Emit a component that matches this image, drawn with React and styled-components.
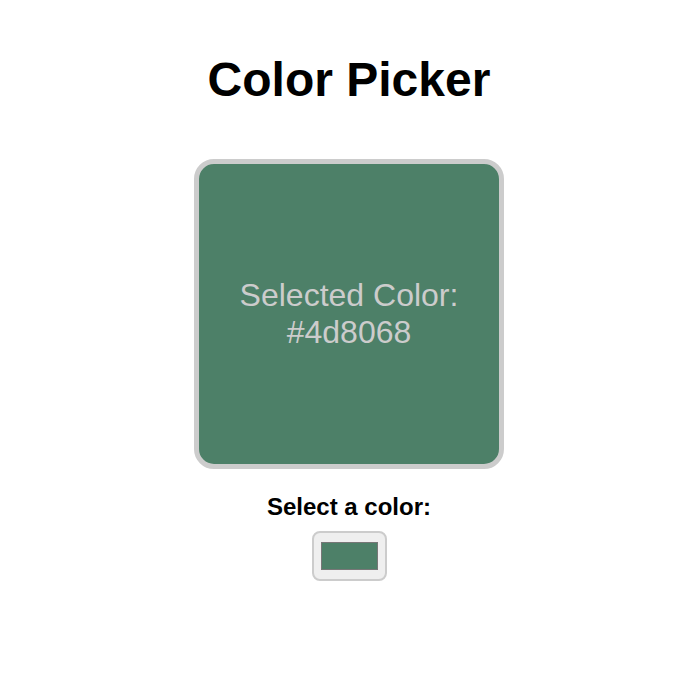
import React, { useState } from "react";
import styled, { createGlobalStyle } from "styled-components";

const GlobalStyle = createGlobalStyle`
  body {
    margin: 0;
    background: #ffffff;
    font-family: "Liberation Sans", Arial, sans-serif;
  }
`;

const Container = styled.div`
  display: flex;
  flex-direction: column;
  align-items: center;
  padding: 20px;
  text-align: center;
`;

const Title = styled.h1`
  font-size: 48px;
  font-weight: bold;
  margin: 32px 0;
  color: #000;
`;

const Preview = styled.div`
  width: 300px;
  height: 300px;
  border: 5px solid #cccccc;
  border-radius: 20px;
  background: ${(p) => p.$color};
  color: #cccccc;
  font-size: 32px;
  display: flex;
  align-items: center;
  justify-content: center;
  text-align: center;
  margin: 20px 0;
`;

const Label = styled.label`
  display: block;
  font-size: 24px;
  font-weight: bold;
  margin-top: 4px;
  margin-bottom: 10px;
  color: #000;
`;

const ColorInput = styled.input`
  width: 75px;
  height: 50px;
  border: 2px solid #cccccc;
  border-radius: 8px;
  background: #efefef;
  padding: 5px;
  box-sizing: border-box;
  cursor: pointer;
`;

export default function App() {
  const [color, setColor] = useState("#4d8068");
  return (
    <>
      <GlobalStyle />
      <Container>
        <Title>Color Picker</Title>
        <Preview $color={color}>
          Selected Color: {color}
        </Preview>
        <Label htmlFor="picker">Select a color:</Label>
        <ColorInput
          id="picker"
          type="color"
          value={color}
          onChange={(e) => setColor(e.target.value)}
        />
      </Container>
    </>
  );
}
